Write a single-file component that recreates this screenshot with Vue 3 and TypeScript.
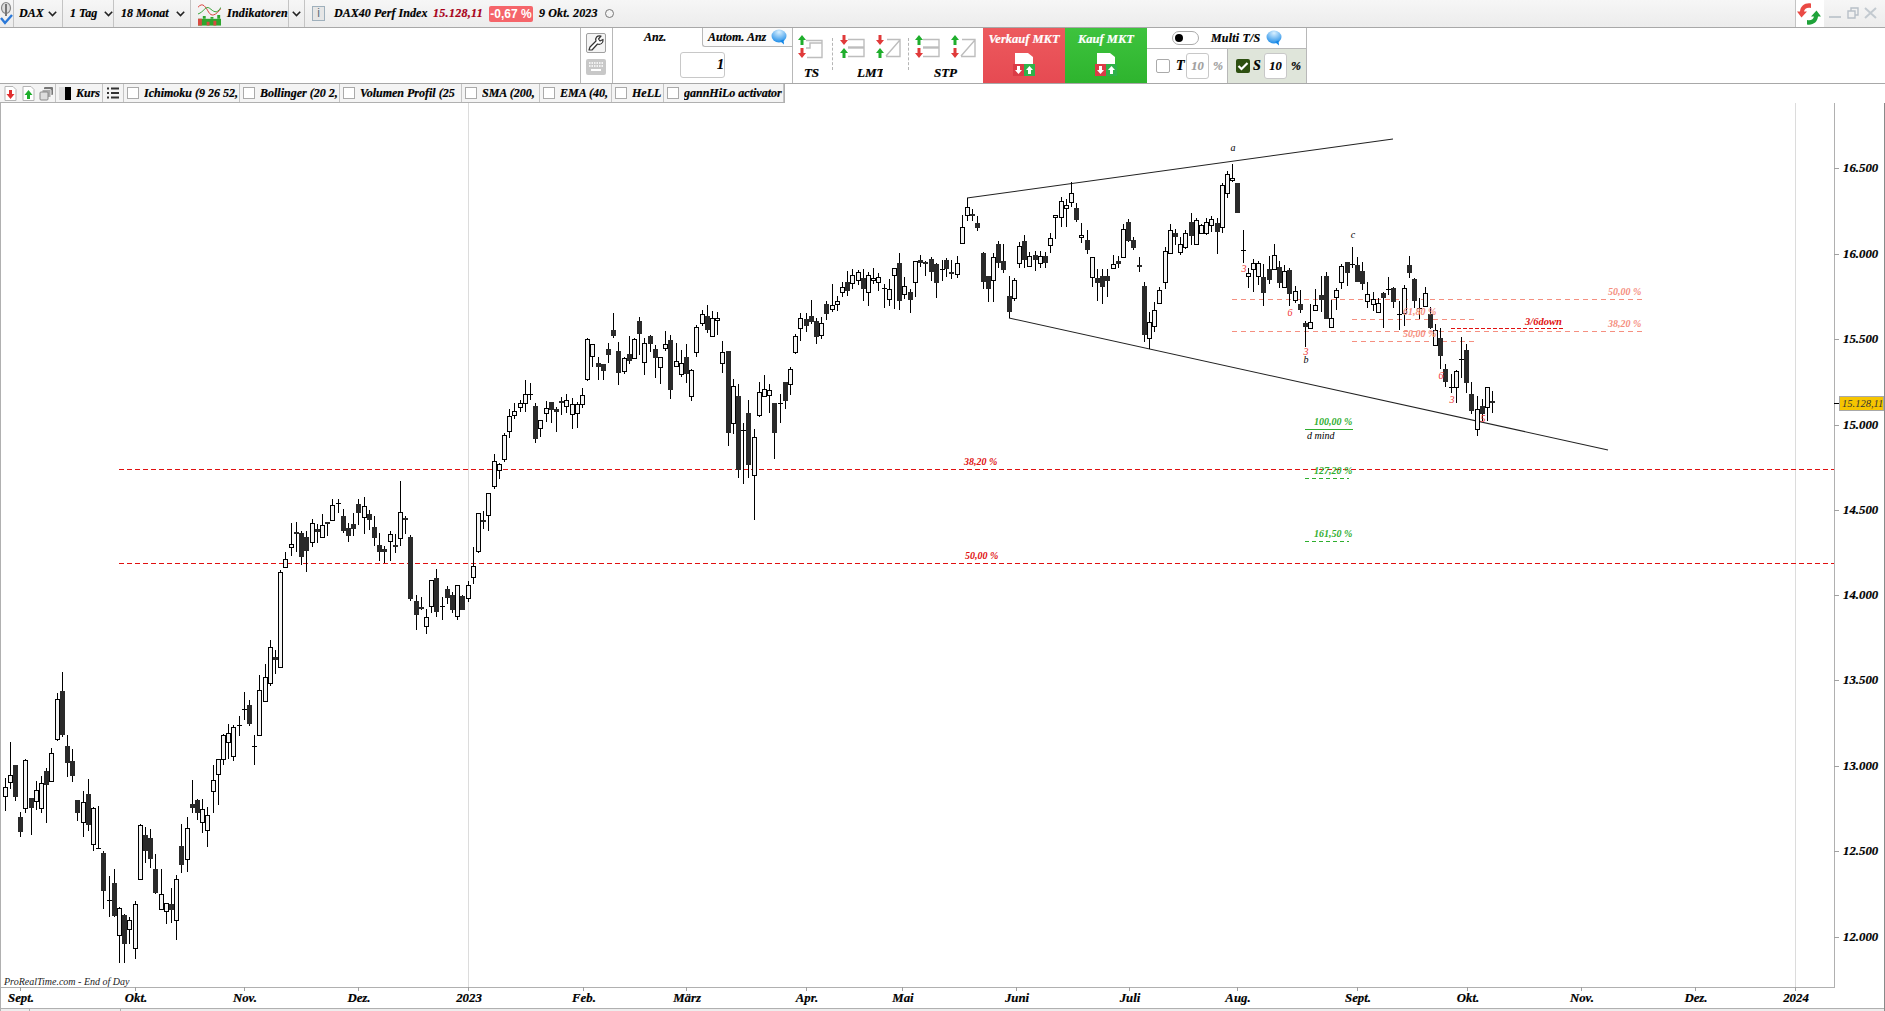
<script setup lang="ts">
type C = [number, number, number, number, number, number];
interface Group { ox: number; oy: number; z: number; d: C[] }
// zoom-space readings: x, high, low, bodyTop, bodyBottom, kind (0 up, 1 down, 2 doji)
const groups: Group[] = [
  { ox: 0, oy: 660, z: 3, d: [
    [16,355,452,382,409,0],[31,247,386,346,367,0],[45,315,422,316,410,1],[60,457,530,471,515,1],[76,297,460,301,445,0],
    [93,415,524,415,445,1],[109,363,450,391,423,0],[124,348,460,370,445,0],[138,323,488,333,374,1],[154,265,364,280,364,0],
    [172,100,242,118,238,0],[187,37,232,93,226,1],[201,225,350,258,308,1],[216,267,365,303,348,1],[231,420,483,420,458,1],
    [250,393,530,427,487,0],[264,358,512,403,494,1],[280,442,572,445,553,0],[295,438,568,565,567,2],[309,572,748,580,692,1],
    [328,648,770,720,722,2],[342,628,770,670,768,1],[358,740,910,745,826,0],[373,763,908,766,851,1],[388,770,853,781,808,0],
    [406,724,896,733,865,0],[421,493,656,496,656,0],[435,500,608,526,572,1],[450,508,623,535,596,1],[465,583,702,628,698,1],
    [484,628,750,701,748,0],[499,728,792,728,754,0],[514,685,788,732,750,1],[529,646,840,658,781,0],[544,492,638,559,614,1],
    [562,472,635,505,598,0],[576,361,458,432,444,1],[591,418,480,420,458,1],[607,418,518,446,487,0],[622,442,560,464,511,0],
    [640,316,458,361,394,0],[655,298,435,298,343,0],[670,222,315,226,298,0],[685,193,297,218,247,0],[700,195,302,202,289,0],
    [718,168,228,196,198,2],[732,97,180,148,150,2],[747,120,197,136,191,1],[763,225,315,259,261,2],[778,45,228,91,224,0],
    [796,12,122,52,122,0],[811,-60,78,-40,68,0],[826,-30,42,-10,0,1],
  ] },
  { ox: 250, oy: 470, z: 3, d: [
    [91,300,590,307,590,0],[106,247,292,268,290,0],[124,160,258,221,230,0],[139,156,245,187,190,1],[153,184,285,190,260,1],
    [168,183,305,202,242,1],[187,148,230,160,217,0],[201,163,219,178,185,1],[217,133,205,166,202,0],[231,155,197,156,161,1],
    [247,87,152,106,149,0],[264,87,128,99,101,2],[279,118,190,138,182,1],[294,160,215,175,197,1],[309,130,197,163,177,1],
    [324,87,165,102,128,1],[343,82,191,109,142,0],[357,121,180,133,149,1],[372,138,227,172,203,1],[387,190,272,226,245,1],
    [402,228,280,238,245,1],[421,183,272,193,214,0],[436,192,248,226,231,1],[451,33,227,127,205,0],[466,139,191,145,149,1],
    [480,196,392,201,386,1],[498,376,480,394,434,1],[514,381,421,412,416,1],[529,417,491,442,469,0],[544,330,428,331,409,0],
    [558,297,440,324,425,1],[576,381,449,408,410,2],[591,349,401,358,383,1],[606,365,428,375,419,1],[622,346,449,346,439,0],
    [636,375,421,378,419,1],[655,334,395,346,385,0],[670,232,341,289,322,0],[685,130,248,130,244,0],[698,123,176,151,155,1],
    [715,70,182,70,136,0],
  ] },
  { ox: 430, oy: 250, z: 3, d: [
    [193,612,718,634,709,0],[208,638,686,643,661,0],[223,548,635,556,628,0],[238,477,563,499,544,0],[253,460,508,484,496,0],
    [271,450,485,460,472,0],[286,390,485,433,460,0],[301,400,450,432,434,2],[315,460,578,469,566,1],[331,511,560,511,535,0],
    [349,454,517,475,490,0],[363,456,518,456,479,1],[379,470,545,477,485,1],[394,440,495,453,458,1],[409,433,488,451,469,0],
    [427,445,537,463,493,0],[442,457,533,463,488,0],[457,415,473,436,463,0],[472,263,392,268,388,0],[487,283,350,283,319,0],
    [504,320,390,339,351,1],[519,342,390,343,362,1],[534,280,338,297,315,1],[549,190,263,240,258,1],[564,277,405,303,368,1],
    [583,320,372,325,364,0],[597,258,342,312,332,1],[613,263,328,268,325,0],[627,202,315,213,251,1],[643,265,374,280,337,0],
    [660,255,305,258,281,1],[675,285,383,297,323,1],[691,320,402,322,352,0],[706,243,303,283,295,0],[720,255,446,270,419,1],
    [739,280,350,332,349,0],[754,300,380,340,373,0],[768,283,398,322,371,1],[784,358,452,361,439,0],[799,226,320,232,307,0],
    [817,180,228,193,220,0],[831,166,250,198,239,1],[847,183,260,205,257,0],[862,187,255,203,211,0],[877,274,368,307,338,0],
    [894,303,587,303,548,1],[910,388,553,409,520,0],[924,403,684,438,661,1],[940,520,701,540,542,2],[955,450,685,489,644,1],
    [973,537,809,562,676,0],[988,396,500,427,496,0],[1003,376,441,418,439,0],[1018,403,488,421,436,0],[1033,460,627,460,548,1],
    [1051,432,518,460,462,2],[1065,396,476,396,452,1],[1081,352,434,358,403,0],[1096,253,311,259,307,0],[1111,190,272,205,235,0],
    [1128,190,245,207,227,1],[1143,150,221,198,215,1],[1158,205,281,213,260,1],[1174,202,268,220,256,0],
  ] },
  { ox: 820, oy: 230, z: 3, d: [
    [18,213,270,222,252,1],[37,162,245,226,236,0],[52,198,242,214,223,0],[67,155,200,172,185,0],[81,123,197,156,182,1],
    [97,117,176,136,158,0],[115,120,165,127,151,0],[129,117,212,144,176,1],[145,127,228,136,187,0],[160,114,163,145,151,0],
    [175,130,183,140,157,0],[192,163,233,175,177,2],[208,148,227,178,208,0],[223,114,236,114,134,0],[237,70,240,99,212,1],
    [253,141,206,169,191,0],[270,178,248,186,209,1],[286,94,201,94,157,0],[300,75,110,90,98,1],[316,92,138,97,100,1],
    [333,81,153,87,125,1],[348,100,204,102,158,1],[365,90,152,117,119,2],[378,85,141,91,116,1],[394,90,147,127,131,1],
    [411,78,145,100,133,0],
  ] },
  { ox: 940, oy: 130, z: 3, d: [
    [67,255,340,292,340,0],[82,205,272,232,256,0],[96,237,272,252,256,1],[111,258,302,279,293,1],[129,367,476,370,455,1],
    [144,438,515,438,478,1],[159,370,515,382,451,0],[174,334,413,342,399,1],[188,342,430,393,420,1],[208,438,565,498,545,1],
    [223,445,512,451,505,0],[238,336,415,349,400,0],[252,315,415,334,391,1],[268,365,412,379,407,0],[285,363,422,376,391,1],
    [301,363,415,379,400,0],[316,365,414,378,398,1],[331,310,368,325,346,0],[346,256,328,256,262,0],[363,200,290,214,262,0],
    [379,207,290,226,233,0],[394,155,232,190,217,0],[408,220,276,235,269,1],[424,280,340,316,322,0],[441,300,373,331,361,1],
    [457,382,472,382,442,0],[471,418,512,445,460,1],[486,418,523,438,470,1],[500,418,500,438,452,1],[520,375,417,401,415,0],
    [534,377,415,393,401,1],[550,283,385,298,380,0],[564,268,337,277,332,1],[579,320,360,331,353,1],[598,382,425,405,410,1],
    [612,455,635,468,614,1],[628,545,658,577,625,0],[643,517,607,541,589,0],[658,472,520,481,520,0],[676,352,476,364,457,0],
    [691,283,370,301,370,0],[704,296,345,309,320,1],[721,322,376,341,367,0],[736,300,358,310,352,0],[752,250,345,276,317,1],
    [769,265,345,271,343,0],[784,282,312,284,309,0],[799,265,316,277,310,0],[814,258,305,266,286,0],[831,265,373,279,305,1],
    [847,160,308,165,292,0],[862,124,203,133,190,0],[877,102,156,145,151,0],[891,158,250,159,248,1],
  ] },
  { ox: 1220, oy: 130, z: 3, d: [
    [70,300,398,360,362,2],[85,415,473,430,437,0],[100,388,485,400,417,0],[115,392,466,400,437,0],[129,402,527,441,488,1],
    [147,378,462,418,450,1],[163,342,416,376,416,0],[177,392,475,411,458,1],[192,405,470,424,470,0],[207,415,527,421,491,1],
    [226,468,518,484,511,0],[240,480,548,522,540,1],[255,573,650,580,590,1],[271,522,595,577,593,0],[286,477,540,526,539,0],
    [303,437,545,496,510,1],[318,425,568,438,566,1],[333,510,592,565,590,0],[349,475,541,481,500,0],[364,402,476,408,456,0],
    [381,395,468,396,428,1],[397,352,415,403,405,2],[411,382,457,406,455,1],[426,397,480,423,461,1],[442,457,534,493,513,0],
    [460,487,543,508,523,0],[475,505,547,520,547,0],[489,487,593,490,505,1],[504,441,494,478,480,2],[519,472,535,475,517,1],
    [538,513,600,553,556,2],[553,465,588,475,550,0],[567,378,443,406,428,1],[582,445,533,448,512,1],[596,505,568,535,537,2],
    [616,470,530,488,527,0],[630,530,597,553,595,1],[646,583,648,601,646,0],[660,595,718,625,678,1],[675,702,770,717,755,1],
    [693,732,790,772,775,2],[709,720,818,722,772,0],[723,620,745,686,690,2],[738,642,790,661,758,1],[753,757,852,793,842,1],
    [772,798,917,838,898,0],[786,808,872,829,851,1],[802,770,872,770,832,0],[816,783,848,814,820,1],
  ] },
];

let wicks = "";
let ups = "";
let downs = "";
for (const g of groups) {
  for (const [zx, h, l, t, b, k] of g.d) {
    const x = Math.round(g.ox + zx / g.z);
    const Y = (v: number) => Math.round(g.oy + v / g.z);
    wicks += `M${x + 0.5} ${Y(h)}V${Y(l)}`;
    if (k === 2) {
      wicks += `M${x - 2} ${Y(t) + 0.5}h5`;
    } else if (k === 0) {
      const hh = Math.max(1, Y(b) - Y(t));
      ups += `M${x - 1.5} ${Y(t) + 0.5}h4v${hh}h-4z`;
    } else {
      const hh = Math.max(2, Y(b) - Y(t));
      downs += `M${x - 2} ${Y(t)}h5v${hh}h-5z`;
    }
  }
}

const yTicks = [
  { y: 168, t: "16.500" }, { y: 254, t: "16.000" }, { y: 339, t: "15.500" }, { y: 425, t: "15.000" },
  { y: 510, t: "14.500" }, { y: 595, t: "14.000" }, { y: 680, t: "13.500" }, { y: 766, t: "13.000" },
  { y: 851, t: "12.500" }, { y: 937, t: "12.000" },
];
const xTicks = [
  { x: 20, t: "Sept." }, { x: 135, t: "Okt." }, { x: 244, t: "Nov." }, { x: 358, t: "Dez." }, { x: 468, t: "2023" },
  { x: 583, t: "Feb." }, { x: 686, t: "März" }, { x: 806, t: "Apr." }, { x: 902, t: "Mai" }, { x: 1016, t: "Juni" },
  { x: 1129, t: "Juli" }, { x: 1237, t: "Aug." }, { x: 1357, t: "Sept." }, { x: 1467, t: "Okt." }, { x: 1581, t: "Nov." },
  { x: 1695, t: "Dez." }, { x: 1795, t: "2024" },
];
const salmon = [
  { x1: 1232, x2: 1643, y: 299 }, { x1: 1232, x2: 1643, y: 331 },
  { x1: 1352, x2: 1476, y: 319 }, { x1: 1352, x2: 1476, y: 341 },
];
const salmonText = [
  { x: 1608, y: 295, t: "50,00 %" }, { x: 1608, y: 327, t: "38,20 %" },
  { x: 1403, y: 315, t: "61,80 %" }, { x: 1403, y: 337, t: "50,00 %" },
];
const waveMarks = [
  { x: 1244, y: 272, t: "3" }, { x: 1290, y: 316, t: "6" }, { x: 1306, y: 355, t: "3" },
  { x: 1441, y: 379, t: "6" }, { x: 1452, y: 403, t: "3" }, { x: 1483, y: 422, t: "5" },
];
const blackMarks = [
  { x: 1233, y: 151, t: "a" }, { x: 1353, y: 238, t: "c" }, { x: 1306, y: 363, t: "b" },
];

const topMenus = [
  { label: "DAX", cls: "m-dax" }, { label: "1 Tag", cls: "m-tag" }, { label: "18 Monat", cls: "m-mon" },
];
const legend = [
  { label: "Ichimoku (9 26 52,", w: 116 }, { label: "Bollinger (20 2,", w: 100 }, { label: "Volumen Profil (25", w: 122 },
  { label: "SMA (200,", w: 78 }, { label: "EMA (40,", w: 72 }, { label: "HeLL", w: 52 }, { label: "gannHiLo activator", w: 120 },
];
type Arrow = "up" | "down";
interface OrderIcon { first: Arrow; second: Arrow; kind: "ts" | "box" | "diag" }
const orderGroups: { label: string; cls: string; icons: OrderIcon[] }[] = [
  { label: "TS", cls: "g-ts", icons: [{ first: "up", second: "down", kind: "ts" }] },
  { label: "LMT", cls: "g-lmt", icons: [{ first: "down", second: "up", kind: "box" }, { first: "down", second: "up", kind: "diag" }] },
  { label: "STP", cls: "g-stp", icons: [{ first: "up", second: "down", kind: "box" }, { first: "up", second: "down", kind: "diag" }] },
];
</script>

<template>
  <div class="page">
    <header class="top">
      <div class="cell logo">
        <svg width="13" height="26" viewBox="0 0 13 26">
          <ellipse cx="6" cy="7" rx="4.5" ry="5.5" fill="#ddd" stroke="#888" stroke-width="1.2" />
          <path d="M6 3v12" stroke="#777" stroke-width="2" />
          <path d="M1 17l4 5 7-8" fill="none" stroke="#2a78d8" stroke-width="2.4" />
        </svg>
      </div>
      <div v-for="m in topMenus" :key="m.label" class="cell menu" :class="m.cls">
        <span class="clip">{{ m.label }}</span>
        <svg class="chev" width="9" height="6" viewBox="0 0 9 6"><path d="M.8.8l3.7 3.7L8.2.8" fill="none" stroke="#222" stroke-width="1.6" /></svg>
      </div>
      <div class="cell indic">
        <svg width="24" height="24" viewBox="0 0 24 24">
          <path d="M0 5c5-6 8 0 11 5s7 4 13-4" fill="none" stroke="#d83a34" stroke-width="1" />
          <path d="M0 12c6-2 8-9 12-6s7 7 12-1" fill="none" stroke="#30a030" stroke-width="1" />
          <rect x="0" y="17" width="24" height="7" fill="#2ea52e" />
          <path d="M0 17h4v7H0zM9 20h3v4H9zM16 19h3v5h-3z" fill="#d84a40" />
          <path d="M5 14h3v3H5zM13 15h3v2h-3zM20 13h3v4h-3z" fill="#2ea52e" />
        </svg>
        <span class="txt">Indikatoren</span>
      </div>
      <div class="cell chevcell">
        <svg class="chev" width="9" height="6" viewBox="0 0 9 6"><path d="M.8.8l3.7 3.7L8.2.8" fill="none" stroke="#222" stroke-width="1.6" /></svg>
      </div>
      <div class="info">
        <span class="ibox">i</span>
        <span class="inst">DAX40 Perf Index</span>
        <span class="price">15.128,11</span>
        <span class="badge">-0,67 %</span>
        <span class="date">9 Okt. 2023</span>
        <span class="dot"></span>
      </div>
      <div class="top-right">
        <div class="refresh">
          <svg width="24" height="24" viewBox="0 0 24 24">
            <path d="M14 1.500C8 .5 3.500 4 3 9.500L0 9.500l4.500 6 5.500-6-3 0C7.500 7 10 5 14 6z" fill="#ea4a45" />
            <path d="M10 22.500c6 1 10.500-2.500 11-8l3 0-4.500-6-5.500 6 3 0c-.5 2.500-3 4.500-7 3.500z" fill="#1fa33a" />
          </svg>
        </div>
        <svg class="winbtns" width="50" height="14" viewBox="0 0 50 14">
          <path d="M1 11h12" stroke="#c3cad0" stroke-width="2" />
          <path d="M20 5h7v7h-7zM23 5V2h7v7h-3" fill="none" stroke="#b8c0c8" stroke-width="1.400" />
          <path d="M37 2l11 10M48 2L37 12" stroke="#c3cad0" stroke-width="2" />
        </svg>
      </div>
    </header>

    <section class="order">
      <div class="blank"></div>
      <div class="tools">
        <button class="wrench">
          <svg width="18" height="18" viewBox="0 0 18 18"><path d="M2 16l1-3 6-6c-1-3 1-6 5-5l-2.500 3 1.500 2 3-1.500c.5 4-3 5.500-5.500 4.500l-5.500 6z" fill="#fff" stroke="#333" stroke-width="1.200" stroke-linejoin="round" /></svg>
        </button>
        <div class="kbd">
          <svg width="20" height="16" viewBox="0 0 20 16"><rect width="20" height="16" rx="2" fill="#c8c8c8" /><path d="M3 4h14M3 7h14" stroke="#fff" stroke-width="1.500" stroke-dasharray="1.500 1" /><path d="M5 11h10" stroke="#fff" stroke-width="2" /></svg>
        </div>
      </div>
      <div class="qty">
        <div class="qty-head">
          <span class="qty-label">Anz.</span>
          <span class="auto">Autom. Anz
            <svg class="bubble" width="16" height="16" viewBox="0 0 16 16"><defs><radialGradient id="bb" cx=".5" cy=".2" r=".85"><stop offset="0" stop-color="#d9f0ff" /><stop offset="1" stop-color="#1487e6" /></radialGradient></defs><ellipse cx="8" cy="7" rx="7.500" ry="6.500" fill="url(#bb)" /><path d="M9 12l4 3.500-.5-5z" fill="#1487e6" /></svg>
          </span>
        </div>
        <div class="qty-input">1</div>
      </div>
      <div class="orders">
        <div v-for="g in orderGroups" :key="g.label" class="ogroup" :class="g.cls">
          <div class="oicons">
            <svg v-for="(ic, i) in g.icons" :key="i" width="25" height="24" viewBox="0 0 25 24">
              <path v-if="ic.first === 'up'" d="M4 0l4 5H5.500v5h-3V5H0z" fill="#1fae2c" />
              <path v-else d="M2.500 0h3v5H8l-4 5-4-5h2.500z" fill="#e03a3a" />
              <path v-if="ic.second === 'up'" d="M4 13l4 5H5.500v5h-3v-5H0z" fill="#1fae2c" />
              <path v-else d="M2.500 13h3v5H8l-4 5-4-5h2.500z" fill="#e03a3a" />
              <g fill="none" stroke="#bdbdbd" stroke-width="1.400">
                <path v-if="ic.kind === 'ts'" d="M8 5.500h16v17H9M24 8H12v5H8" />
                <path v-if="ic.kind === 'box'" d="M8 4.500h16v17H8" />
                <path v-if="ic.kind === 'box'" d="M8 12.500h16" stroke-width="2.400" />
                <path v-if="ic.kind === 'diag'" d="M11 4.500h13v17H10M10 21l14-16" />
              </g>
            </svg>
          </div>
          <span class="olabel clip">{{ g.label }}</span>
        </div>
      </div>
      <div class="mkt sell">
        <span class="mkt-t clip">Verkauf MKT</span>
        <svg width="22" height="24" viewBox="0 0 22 24">
          <path d="M2 0h13l5 4v8H2z" fill="#fff" />
          <rect x="0" y="11" width="11" height="12" fill="#db3b46" /><rect x="11" y="11" width="11" height="12" fill="#2fb24a" />
          <path d="M4 13h3v4h2l-3.500 4-3.500-4h2zM16.500 13l3.500 4h-2v4h-3v-4h-2z" fill="#fff" />
        </svg>
      </div>
      <div class="mkt buy">
        <span class="mkt-t clip">Kauf MKT</span>
        <svg width="22" height="24" viewBox="0 0 22 24">
          <path d="M2 0h13l5 4v8H2z" fill="#fff" />
          <rect x="0" y="11" width="11" height="12" fill="#db3b46" /><rect x="11" y="11" width="11" height="12" fill="#2fb24a" />
          <path d="M4 13h3v4h2l-3.500 4-3.500-4h2zM16.500 13l3.500 4h-2v4h-3v-4h-2z" fill="#fff" />
        </svg>
      </div>
      <div class="multi">
        <div class="multi-top">
          <span class="toggle"><i></i></span>
          <span class="multi-label">Multi T/S</span>
          <svg class="bubble" width="16" height="16" viewBox="0 0 16 16"><ellipse cx="8" cy="7" rx="7.500" ry="6.500" fill="url(#bb)" /><path d="M9 12l4 3.500-.5-5z" fill="#1487e6" /></svg>
        </div>
        <div class="multi-bot">
          <div class="tpart">
            <span class="chk"></span>
            <span class="letter">T</span>
            <span class="pct-in off">10</span>
            <span class="pct off">%</span>
          </div>
          <div class="spart">
            <span class="chk on">
              <svg width="14" height="14" viewBox="0 0 14 14"><path d="M2.500 7l3 3 6-6" fill="none" stroke="#fff" stroke-width="2.200" /></svg>
            </span>
            <span class="letter">S</span>
            <span class="pct-in">10</span>
            <span class="pct">%</span>
          </div>
        </div>
      </div>
    </section>

    <nav class="legend">
      <div class="lg-btns">
        <svg width="15" height="15" viewBox="0 0 15 15"><path d="M2 .5h8l3 3v11H2z" fill="#fff" stroke="#b5b5b5" /><path d="M6 4h3v4h2.500l-4 5-4-5H6z" fill="#e03030" /></svg>
        <svg width="15" height="15" viewBox="0 0 15 15"><path d="M2 .5h8l3 3v11H2z" fill="#fff" stroke="#b5b5b5" /><path d="M7.500 4l4 5H9v4H6V9H3.500z" fill="#1fae2c" /></svg>
        <svg width="15" height="15" viewBox="0 0 15 15"><rect x="5" y="1" width="9" height="8" rx="1" fill="#777" /><rect x="3" y="3.500" width="9" height="8" rx="1" fill="#aaa" stroke="#fff" stroke-width=".8" /><rect x="1" y="6" width="8" height="8" rx="1" fill="#ddd" stroke="#888" /></svg>
      </div>
      <div class="lg-kurs">
        <span class="swatch"></span>
        <span class="lg-t clip">Kurs</span>
      </div>
      <div class="lg-list">
        <svg width="12" height="12" viewBox="0 0 12 12"><path d="M0 1.500h2M4 1.500h8M0 6h2M4 6h8M0 10.500h2M4 10.500h8" stroke="#333" stroke-width="2" /></svg>
      </div>
      <div v-for="l in legend" :key="l.label" class="lg-item" :style="{ width: l.w + 'px' }">
        <span class="lg-chk"></span>
        <span class="lg-t clip">{{ l.label }}</span>
      </div>
    </nav>

    <main class="chart">
      <svg class="plot" width="1885" height="908" viewBox="0 103 1885 908">
        <rect x="1" y="1009" width="1883" height="2" fill="#eee" />
        <g shape-rendering="crispEdges">
          <path d="M468.500 103V987M1795.500 103V987" stroke="#dcdcdc" />
          <path d="M0.500 103V1011M1 987.500H1834M1834.500 103V988M1 1008.500H1884" stroke="#b0b0b0" fill="none" />
          <path d="M1884.500 0V1011" stroke="#8a8a8a" />
          <path d="M29.500 1008V1011M120.500 1008V1011" stroke="#b0b0b0" />
          <path v-for="t in yTicks" :key="t.t" :d="`M1834 ${t.y + 0.5}h5`" stroke="#a0a0a0" />
          <path v-for="t in xTicks" :key="t.x" :d="`M${t.x + 0.5} 987v4`" stroke="#a0a0a0" />
        </g>
        <g fill="none" shape-rendering="crispEdges">
          <path d="M119 469.500H1834M119 563.500H1834" stroke="#e01010" stroke-dasharray="5 3" />
          <path v-for="s in salmon" :key="s.x1 + '-' + s.y" :d="`M${s.x1} ${s.y + 0.5}H${s.x2}`" stroke="#f58f80" stroke-dasharray="5 4" />
          <path d="M1451 328.500H1565" stroke="#e01010" stroke-dasharray="4 2" />
          <path d="M1305 429.500H1353" stroke="#2fae2f" />
          <path d="M1305 478.500H1349M1305 541.500H1349" stroke="#2fae2f" stroke-dasharray="4 3" />
        </g>
        <g fill="none" stroke="#222" stroke-width="1.100">
          <path d="M967 198L1393 139" />
          <path d="M1009 318L1608 450" />
          <path d="M967.500 198v12" stroke-width="1" />
        </g>
        <g shape-rendering="crispEdges">
          <path :d="wicks" stroke="#000" fill="none" />
          <path :d="ups" fill="#f4f4f4" stroke="#000" />
          <path :d="downs" fill="#2a2a2a" />
        </g>
        <text v-for="t in yTicks" :key="t.t" class="ax" x="1843" :y="t.y + 4">{{ t.t }}</text>
        <text v-for="t in xTicks" :key="t.x" class="ax" :x="t.x + 1" y="1002" text-anchor="middle">{{ t.t }}</text>
        <text class="wm" x="4" y="985">ProRealTime.com - End of Day</text>
        <text class="rd" x="964" y="465">38,20 %</text>
        <text class="rd" x="965" y="559">50,00 %</text>
        <text v-for="t in salmonText" :key="t.x + '-' + t.y" class="sm" :x="t.x" :y="t.y">{{ t.t }}</text>
        <text class="dn" x="1525" y="325">3/6down</text>
        <text v-for="t in waveMarks" :key="t.x" class="wv" :x="t.x" :y="t.y" text-anchor="middle">{{ t.t }}</text>
        <text v-for="t in blackMarks" :key="t.t" class="bk" :x="t.x" :y="t.y" text-anchor="middle">{{ t.t }}</text>
        <text class="gr" x="1314" y="425">100,00 %</text>
        <text class="gr" x="1314" y="474">127,20 %</text>
        <text class="gr" x="1314" y="537">161,50 %</text>
        <text class="bk" x="1307" y="439">d mind</text>
        <g>
          <path d="M1834 403.500h5" stroke="#000" shape-rendering="crispEdges" />
          <rect x="1839.500" y="396.500" width="44" height="14" fill="#f6c500" stroke="#a8a8a8" />
          <text class="last" x="1842" y="407">15.128,11</text>
        </g>
      </svg>
    </main>
  </div>
</template>

<style>
html, body { margin: 0; background: #fff; overflow: hidden; }
</style>

<style scoped>
.page {
  width: 1885px;
  height: 1011px;
  display: flex;
  flex-direction: column;
  overflow: hidden;
  font-family: "Liberation Serif", serif;
  font-style: italic;
  font-weight: 700;
  font-size: 12px;
  color: #000;
  background: #fff;
  -webkit-text-stroke: 0.2px currentColor;
}
.clip { display: block; overflow: hidden; white-space: nowrap; }

/* top bar */
.top {
  height: 27px;
  flex: none;
  box-sizing: content-box;
  display: flex;
  align-items: stretch;
  background: linear-gradient(#f6f6f6, #ececec);
  border-bottom: 1px solid #a8a8a8;
}
.cell {
  flex: none;
  box-sizing: border-box;
  display: flex;
  align-items: center;
  border-right: 1px solid #c4c4c4;
}
.logo { width: 14px; overflow: hidden; }
.menu { padding-left: 5px; }
.m-dax { width: 49px; }
.m-dax .clip { width: 26px; }
.m-tag { width: 51px; padding-left: 7px; }
.m-tag .clip { width: 31px; }
.m-mon { width: 77px; padding-left: 7px; }
.m-mon .clip { width: 52px; }
.chev { flex: none; margin-left: 3px; }
.indic { width: 98px; padding-left: 7px; }
.indic .txt { margin-left: 6px; white-space: nowrap; letter-spacing: .2px; }
.chevcell { width: 16px; }
.chevcell .chev { margin-left: 3px; }
.info { display: flex; align-items: center; padding-left: 7px; }
.ibox {
  width: 13px;
  height: 15px;
  box-sizing: border-box;
  border: 1px solid #9fb0bc;
  background: #e6e6e6;
  color: #5f6d78;
  font: 400 12px/13px "Liberation Sans", sans-serif;
  text-align: center;
  margin-right: 9px;
  -webkit-text-stroke: 0;
}
.inst { width: 94px; white-space: nowrap; letter-spacing: .05px; }
.price { color: #a80018; margin-left: 5px; width: 52px; white-space: nowrap; letter-spacing: .3px; }
.badge {
  margin-left: 4px;
  width: 44px;
  height: 16px;
  line-height: 16px;
  text-align: center;
  background: #f5656a;
  color: #fff;
  font: 700 12px/16px "Liberation Sans", sans-serif;
  border-radius: 2px;
  white-space: nowrap;
  -webkit-text-stroke: 0;
}
.date { margin-left: 6px; width: 61px; white-space: nowrap; letter-spacing: .15px; }
.dot {
  margin-left: 5px;
  width: 9px;
  height: 9px;
  box-sizing: border-box;
  border: 1px solid #777;
  border-radius: 50%;
  background: #f4f4f4;
}
.top-right { margin-left: auto; display: flex; align-items: stretch; padding-right: 7px; }
.refresh {
  width: 29px;
  box-sizing: border-box;
  border-left: 1px solid #c4c4c4;
  padding-left: 1px;
  background: #fff;
  display: flex;
  align-items: center;
}
.winbtns { margin: 6px 0 0 4px; }

/* order row */
.order {
  height: 55px;
  flex: none;
  display: flex;
  border-bottom: 1px solid #a8a8a8;
  background: #fff;
}
.blank { width: 581px; box-sizing: border-box; flex: none; border-right: 1px solid #b8b8b8; }
.tools {
  width: 32px;
  flex: none;
  border-right: 1px solid #b8b8b8;
  padding: 5px 0 0 5px;
  box-sizing: border-box;
  display: flex;
  flex-direction: column;
  gap: 6px;
}
.wrench {
  width: 20px;
  height: 20px;
  padding: 0;
  display: flex;
  align-items: center;
  justify-content: center;
  border: 1px solid #a0a0a0;
  border-radius: 2px;
  background: #f4f4f4;
}
.kbd { height: 16px; line-height: 0; }
.qty { width: 180px; flex: none; border-right: 1px solid #b8b8b8; box-sizing: border-box; }
.qty-head { display: flex; height: 19px; }
.qty-label { width: 89px; padding-left: 31px; box-sizing: border-box; line-height: 19px; }
.auto {
  flex: 1;
  box-sizing: border-box;
  padding-left: 5px;
  display: flex;
  align-items: center;
  gap: 5px;
  border-left: 1px solid #b8b8b8;
  border-bottom: 1px solid #b8b8b8;
  border-bottom-left-radius: 3px;
  white-space: nowrap;
  background: #fbfbfb;
}
.bubble { flex: none; }
.qty-input {
  width: 45px;
  height: 26px;
  margin: 5px 0 0 67px;
  box-sizing: border-box;
  border: 1px solid #c8c8c8;
  border-radius: 3px;
  text-align: right;
  line-height: 24px;
  font-size: 14px;
}
.orders { width: 190px; flex: none; display: flex; padding-left: 5px; box-sizing: border-box; }
.ogroup { position: relative; display: flex; flex-direction: column; align-items: center; flex: none; box-sizing: border-box; }
.g-ts { width: 34px; padding-right: 9px; }
.g-ts .olabel { margin-left: 2px; }
.g-lmt { width: 76px; }
.g-stp { width: 75px; }
.g-lmt::before, .g-stp::before {
  content: "";
  position: absolute;
  left: 0;
  top: 10px;
  height: 32px;
  border-left: 1px dashed #b5b5b5;
}
.oicons { display: flex; gap: 11px; margin-top: 7px; height: 24px; }
.olabel { margin-top: 6px; font-size: 13px; width: 26px; text-align: center; }
.mkt {
  width: 82px;
  flex: none;
  display: flex;
  flex-direction: column;
  align-items: center;
  color: #fff;
}
.sell { background: linear-gradient(#ed5a5e, #e64a52); }
.buy { background: linear-gradient(#3ec33e, #2eb42e); }
.mkt-t { margin-top: 4px; width: 74px; text-align: center; font-size: 12.500px; height: 15px; line-height: 15px; }
.mkt svg { margin-top: 6px; }
.multi { width: 160px; flex: none; border-right: 1px solid #b8b8b8; box-sizing: border-box; display: flex; flex-direction: column; }
.multi-top {
  height: 20px;
  flex: none;
  display: flex;
  align-items: center;
  border-bottom: 1px solid #b8b8b8;
  padding-left: 25px;
}
.toggle {
  width: 27px;
  height: 14px;
  box-sizing: border-box;
  border: 1px solid #aaa;
  border-radius: 7px;
  background: #fff;
  position: relative;
  flex: none;
}
.toggle i {
  position: absolute;
  left: 2px;
  top: 2px;
  width: 8px;
  height: 8px;
  border-radius: 50%;
  background: #000;
}
.multi-label { margin-left: 12px; width: 55px; white-space: nowrap; letter-spacing: .2px; }
.multi-bot { flex: 1; display: flex; }
.tpart { width: 80px; display: flex; align-items: center; padding-left: 9px; box-sizing: border-box; }
.spart { flex: 1; display: flex; align-items: center; background: #dfe5da; padding-left: 8px; border-left: 1px solid #b8b8b8; }
.chk {
  width: 14px;
  height: 14px;
  flex: none;
  box-sizing: border-box;
  border: 1px solid #aaa;
  border-radius: 2px;
  background: #fff;
}
.chk.on { background: #2d4f10; border: 0; line-height: 0; }
.letter { flex: none; font-size: 14px; }
.tpart .letter { margin-left: 6px; width: 10px; }
.spart .letter { margin-left: 3px; width: 11px; }
.pct-in {
  width: 23px;
  height: 26px;
  flex: none;
  box-sizing: border-box;
  border: 1px solid #c8c8c8;
  border-radius: 3px;
  background: #fff;
  text-align: center;
  line-height: 24px;
  font-size: 12.500px;
}
.pct-in.off { color: #a0a0a0; }
.pct { margin-left: 4px; font-size: 12px; }
.pct.off { color: #a0a0a0; }

/* legend */
.legend {
  width: 784px;
  height: 18px;
  flex: none;
  display: flex;
  background: #f4f4f4;
  border-bottom: 1px solid #b0b0b0;
  border-right: 1px solid #b0b0b0;
  box-sizing: content-box;
}
.lg-btns {
  width: 56px;
  flex: none;
  box-sizing: border-box;
  display: flex;
  gap: 3px;
  padding: 2px 0 0 3px;
  border-right: 1px solid #c4c4c4;
}
.lg-kurs {
  width: 47px;
  flex: none;
  box-sizing: border-box;
  display: flex;
  align-items: center;
  padding-left: 3px;
  border-right: 1px solid #c4c4c4;
}
.swatch {
  width: 12px;
  height: 13px;
  flex: none;
  margin-right: 5px;
  background: linear-gradient(90deg, #ddd 50%, #000 50%);
}
.lg-list {
  width: 21px;
  flex: none;
  box-sizing: border-box;
  display: flex;
  align-items: center;
  padding-left: 4px;
  border-right: 1px solid #c4c4c4;
}
.lg-item {
  flex: none;
  box-sizing: border-box;
  display: flex;
  align-items: center;
  padding-left: 3px;
  border-right: 1px solid #c4c4c4;
}
.lg-chk {
  width: 12px;
  height: 12px;
  flex: none;
  box-sizing: border-box;
  border: 1px solid #aaa;
  background: #fff;
  margin-right: 5px;
}
.lg-t { flex: 1; min-width: 0; font-size: 12px; }

/* chart */
.chart { flex: 1; min-height: 0; }
.plot { display: block; }
.plot text { font-family: "Liberation Serif", serif; font-style: italic; font-weight: 700; -webkit-text-stroke: 0; }
.plot .ax { font-size: 12.800px; fill: #000; stroke: #000; stroke-width: .2px; }
.plot .wm { font-size: 10px; font-weight: 400; fill: #222; }
.plot .rd { font-size: 10px; fill: #e01010; }
.plot .sm { font-size: 10px; fill: #f58f80; }
.plot .dn { font-size: 10.500px; fill: #e01010; }
.plot .wv { font-size: 10px; fill: #f03030; font-weight: 400; }
.plot .bk { font-size: 10px; fill: #000; font-weight: 400; }
.plot .gr { font-size: 10px; fill: #2fae2f; }
.plot .last { font-size: 10.500px; fill: #333; font-weight: 400; }
</style>
